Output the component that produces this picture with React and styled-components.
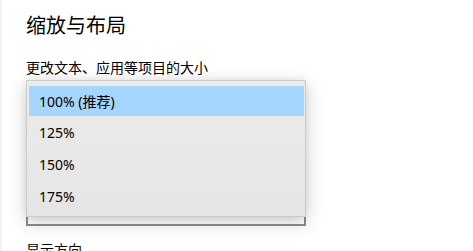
import React from 'react'
import styled, { createGlobalStyle } from 'styled-components'

const GlobalStyle = createGlobalStyle`
  html, body {
    margin: 0;
    padding: 0;
    background: #fff;
    overflow: hidden;
  }
  body {
    font-family: "Noto Sans", "Noto Sans CJK SC", sans-serif;
    color: #000;
  }
`

const Page = styled.div`
  height: 251px;
  border-left: 2px solid #f2f2f2;
  padding: 12px 0 0 24px;
  box-sizing: border-box;
`

const Title = styled.h1`
  margin: 0;
  font-size: 20px;
  line-height: 28px;
  font-weight: 400;
`

const Label = styled.div`
  font-size: 14px;
  line-height: 20px;
  margin-top: ${p => p.gap}px;
`

const Field = styled.div`
  position: relative;
  margin-top: 2px;
  width: 280px;
  height: 146px;
  border: 2px solid #8d8d8d;
  border-top-color: transparent;
  box-sizing: border-box;
`

const Popup = styled.div`
  position: absolute;
  top: -2px;
  left: -2px;
  right: -2px;
  height: 137px;
  box-sizing: border-box;
  border: 1px solid #cbcbcb;
  background: linear-gradient(#ebebeb, #e5e5e5);
  box-shadow: 0 6px 18px rgba(0, 0, 0, 0.18), 0 0 8px rgba(0, 0, 0, 0.08);
  padding: 4px 1px 4px 1px;
  display: flex;
  flex-direction: column;
`

const Option = styled.div`
  height: 32px;
  display: flex;
  align-items: center;
  padding-left: 10px;
  margin-left: 1px;
  font-size: 14px;
  background: ${p => (p.selected ? '#a6d6fe' : 'transparent')};
  ${p => p.selected && 'height: 30px; margin-top: 1px; margin-bottom: 1px;'}
`

const options = ['100% (推荐)', '125%', '150%', '175%']

export default function App() {
  return (
    <>
      <GlobalStyle />
      <Page>
        <Title>缩放与布局</Title>
        <Label gap={18}>更改文本、应用等项目的大小</Label>
        <Field>
          <Popup>
            {options.map((o, i) => (
              <Option key={o} selected={i === 0}>{o}</Option>
            ))}
          </Popup>
        </Field>
        <Label gap={14}>显示方向</Label>
      </Page>
    </>
  )
}
